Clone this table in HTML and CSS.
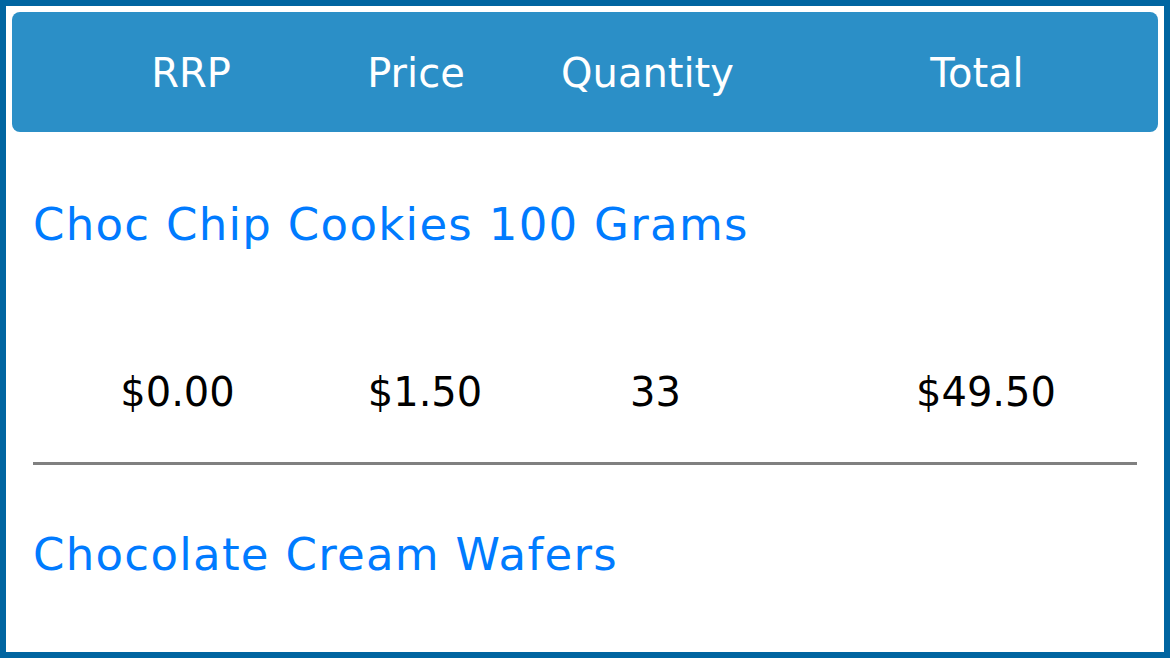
FILE: index.html
```html
<!DOCTYPE html>
<html lang="en">
<head>
<meta charset="utf-8">
<title>Order lines</title>
<link rel="stylesheet" href="styles.css">
</head>
<body>
<div class="frame">
  <div class="header">
    <div class="hcell h1">RRP</div>
    <div class="hcell h2">Price</div>
    <div class="hcell h3">Quantity</div>
    <div class="hcell h4">Total</div>
  </div>
  <div class="items">
    <div class="item">
      <div class="name">Choc Chip Cookies 100 Grams</div>
      <div class="values">
        <div class="vcell v1">$0.00</div>
        <div class="vcell v2">$1.50</div>
        <div class="vcell v3">33</div>
        <div class="vcell v4">$49.50</div>
      </div>
      <div class="divider"></div>
    </div>
    <div class="item">
      <div class="name">Chocolate Cream Wafers</div>
    </div>
  </div>
</div>
</body>
</html>
```
FILE: styles.css
```css
html, body {
  margin: 0;
  padding: 0;
  background: #ffffff;
}
body {
  font-family: "DejaVu Sans", "Open Sans", sans-serif;
}
.frame {
  box-sizing: border-box;
  width: 1170px;
  height: 658px;
  border: 6px solid #0065a1;
  padding: 6px;
  overflow: hidden;
  background: #ffffff;
}
.header {
  box-sizing: border-box;
  height: 120px;
  padding: 2px 0 0 64px;
  background: #2b8fc7;
  border-radius: 8px;
  display: flex;
  color: #ffffff;
  font-size: 40px;
  line-height: 118px;
}
.hcell { text-align: center; white-space: nowrap; }
.h1 { width: 230px; }
.h2 { width: 220px; }
.h3 { width: 243px; }
.h4 { width: 362px; margin-left: 27px; }

.items {
  padding: 3px 21px 0;
}
.item {
  padding-top: 60px;
}
.name {
  color: #007bff;
  font-size: 45px;
  line-height: 60px;
  letter-spacing: 1.3px;
  white-space: nowrap;
}
.values {
  margin-top: 112px;
  display: flex;
  font-size: 40px;
  line-height: 50px;
  color: #000000;
}
.vcell { text-align: center; white-space: nowrap; }
.v1 { width: 289px; }
.v2 { width: 206px; }
.v3 { width: 255px; }
.v4 { flex: 1; padding-left: 52px; }
.divider {
  margin-top: 45px;
  height: 3px;
  background: #808080;
}
```
